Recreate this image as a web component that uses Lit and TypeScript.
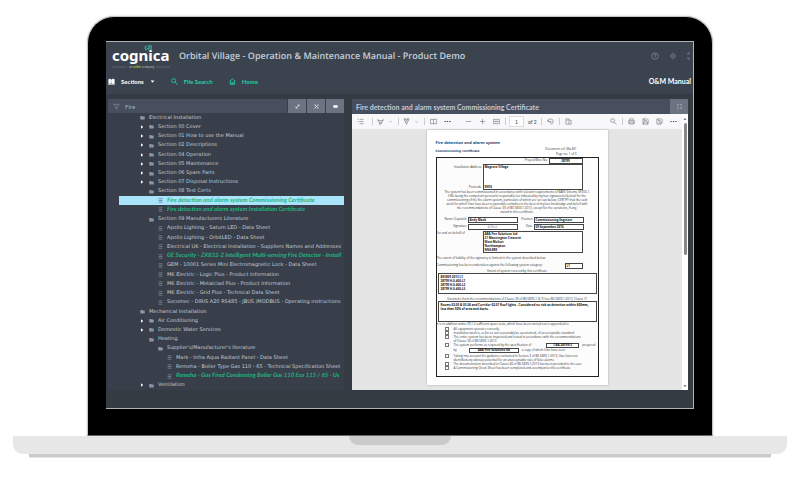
import { LitElement, html, css, svg, nothing } from "lit";
import { customElement } from "lit/decorators.js";
import { classMap } from "lit/directives/class-map.js";

const icons: Record<string, unknown> = {
  help: svg`<circle cx="8" cy="8" r="6.5"/><path d="M6 6.5a2 2 0 1 1 2.4 2V10M8 11.5v1"/>`,
  sun: svg`<circle cx="8" cy="8" r="3"/><path d="M8 1v2.5M8 12.5v2.5M1 8h2.5M12.5 8H15M3 3l1.800 1.800M11.200 11.200L13 13M13 3l-1.800 1.800M4.800 11.200L3 13"/>`,
  expand: svg`<path d="M2 6V2h4M10 2h4v4M14 10v4h-4M6 14H2v-4"/>`,
  book: svg`<path fill="currentColor" d="M2 3h4v9H2zM9 3h5v9H9z"/><path d="M0 14h16M6 6h3M6 9h3"/>`,
  search: svg`<circle cx="6" cy="6" r="4.500"/><path d="M9.500 9.500L15 15"/>`,
  home: svg`<path d="M1.500 7.500L8 2l6.500 5.500M3 7v7.500h10V7M6.500 14v-4h3v4"/>`,
  caret: svg`<path fill="currentColor" stroke="none" d="M2 5h12l-6 7z"/>`,
  right: svg`<path fill="currentColor" stroke="none" d="M4 1l9 7-9 7z"/>`,
  funnel: svg`<path d="M2 3h12L9.500 8.500V14l-3-2V8.500z"/>`,
  arrows: svg`<path d="M3 13L13 3M8.500 3H13v4.500M3 8.500V13h4.500"/>`,
  close: svg`<path d="M3 3l10 10M13 3L3 13M1 3h4M11 3h4M1 13h4M11 13h4"/>`,
  pill: svg`<rect fill="currentColor" x="1" y="5" width="14" height="6" rx="3"/>`,
  folder: svg`<path fill="currentColor" stroke="none" d="M1 3h6l1 2h7v9H1z"/>`,
  file: svg`<path d="M2 2.500h12M2 8h12M2 13.500h12"/>`,
  list: svg`<path d="M1 3h3M6 3h9M4 8h11M6 13h9M1 8h1"/>`,
  marker: svg`<path d="M2 2v4h12V2M4 6l1 5h6l1-5M6 11v4l4-2v-2"/>`,
  pen: svg`<path d="M2 2h12L9.500 12h-3zM5 2l3 6 3-6M8 12v3"/>`,
  chevron: svg`<path d="M4 7l4 3 4-3"/>`,
  book2: svg`<path d="M1 3h14v10H1zM8 3v10"/>`,
  dots: svg`<path fill="currentColor" stroke="none" d="M1 7h3v2H1zM6.500 7h3v2h-3zM12 7h3v2h-3z"/>`,
  minus: svg`<path d="M2 8h12"/>`,
  plus: svg`<path d="M2 8h12M8 2v12"/>`,
  fit: svg`<path d="M1 3h14v10H1zM4 8h8M6 6L4 8l2 2M10 6l2 2-2 2"/>`,
  rotate: svg`<path d="M2 8a6 6 0 1 1 6 6M2 4v4h4M8 7l2 2-2 2-2-2z"/>`,
  page: svg`<path d="M2 2h7v12H2zM9 5h5v9H9M4 5h3"/>`,
  print: svg`<path d="M4 6V2h8v4M4 12H1.500V6h13v6H12M4 9.500h8V14H4z"/>`,
  save: svg`<path d="M2 2h10l2 2v10H2zM5 2v4h6M4 14V9h8v5"/>`,
  saveas: svg`<path d="M2 2h10l2 2v4M5 2v4h6M2 2v12h5V9h5M9 14l5-5 1 1-5 5H9z"/>`,
};

const icon = (name: string, kind = "") => html`<svg class="icon ${kind}" viewBox="0 0 16 16" aria-hidden="true">${icons[name]}</svg>`;

const shared = css`
  *, *::before, *::after { box-sizing: border-box; }
  button, input { font: inherit; color: inherit; margin: 0; padding: 0; border: 0; background: none; }
  .icon { width: 7px; height: 7px; flex: none; fill: none; stroke: currentColor; stroke-width: 2; display: block; }
  .small { width: 5px; height: 5px; }
`;

interface Node { level: number; text: string; kind?: "file"; closed?: boolean; hit?: boolean; selected?: boolean; }

const nodes: Node[] = [
  { level: 0, text: "Electrical Installation" },
  { level: 1, text: "Section 00 Cover", closed: true },
  { level: 1, text: "Section 01 How to use the Manual", closed: true },
  { level: 1, text: "Section 02 Descriptions", closed: true },
  { level: 1, text: "Section 04 Operation", closed: true },
  { level: 1, text: "Section 05 Maintenance", closed: true },
  { level: 1, text: "Section 06 Spare Parts", closed: true },
  { level: 1, text: "Section 07 Disposal Instructions", closed: true },
  { level: 1, text: "Section 08 Test Certs" },
  { level: 2, text: "Fire detection and alarm system Commissioning Certificate", kind: "file", hit: true, selected: true },
  { level: 2, text: "Fire detection and alarm system Installation Certificate", kind: "file", hit: true },
  { level: 1, text: "Section 09 Manufacturers Literature" },
  { level: 2, text: "Apollo Lighting - Saturn LED - Data Sheet", kind: "file" },
  { level: 2, text: "Apollo Lighting - OrbitLED - Data Sheet", kind: "file" },
  { level: 2, text: "Electrical UK - Electrical Installation - Suppliers Names and Addresses", kind: "file" },
  { level: 2, text: "GE Security - ZX832-2 Intelligent Multi-sensing Fire Detector - Install", kind: "file", hit: true },
  { level: 2, text: "GEM - 10001 Series Mini Electromagnetic Lock - Data Sheet", kind: "file" },
  { level: 2, text: "MK Electric - Logic Plus - Product Information", kind: "file" },
  { level: 2, text: "MK Electric - Metalclad Plus - Product Information", kind: "file" },
  { level: 2, text: "MK Electric - Grid Plus - Technical Data Sheet", kind: "file" },
  { level: 2, text: "Socomec - DIRIS A20 RS485 - JBUS /MODBUS - Operating instructions", kind: "file" },
  { level: 0, text: "Mechanical Installation" },
  { level: 1, text: "Air Conditioning", closed: true },
  { level: 1, text: "Domestic Water Services", closed: true },
  { level: 1, text: "Heating" },
  { level: 2, text: "Supplier's/Manufacturer's literature" },
  { level: 3, text: "Mark - Infra Aqua Radiant Panel - Data Sheet", kind: "file" },
  { level: 3, text: "Remeha - Boiler Type Gas 110 - 65 - Technical Specification Sheet", kind: "file" },
  { level: 3, text: "Remeha - Gas Fired Condensing Boiler Gas 110 Eco 115 / 65 - Us", kind: "file", hit: true },
  { level: 1, text: "Ventilation", closed: true },
];

@customElement("section-tree")
class SectionTree extends LitElement {
  static styles = [shared, css`
    :host { display: flex; flex-direction: column; min-width: 0; font-size: 6px; line-height: 8px; text-rendering: geometricPrecision; color: #c3cad5; }
    .filter { display: flex; gap: 1px; height: 14px; background: #383f4a; }
    .box { flex: 1; display: flex; align-items: center; gap: 5px; padding: 0 5px; background: #474e5e; color: #a5aebd; }
    .box input { flex: 1; min-width: 0; height: 12px; }
    .box .icon { stroke-width: 1; }
    .filter button { width: 18px; display: grid; place-items: center; background: #6b7480; color: #fff; }
    ul { list-style: none; margin: 0; padding: 0; flex: 1; display: grid; grid-template-columns: minmax(0, 1fr); grid-auto-rows: 1fr; background: #383f4a; font-family: "DejaVu Sans", sans-serif; font-size: 5px; }
    li { display: flex; align-items: center; gap: 4px; min-height: 0; white-space: nowrap; margin-left: 11px; }
    .l0 { padding-left: 12px; } .l1 { padding-left: 21px; } .l2 { padding-left: 30px; } .l3 { padding-left: 39px; }
    .twist { width: 5px; flex: none; color: #fff; }
    .twist .icon { width: 4px; height: 4px; }
    li > .icon { color: #8e97a3; }
    .name { flex: 1; min-width: 0; overflow: hidden; }
    .hit { color: #1fb57f; font-family: Lato, sans-serif; font-size: 6px; font-style: italic; font-weight: bold; }
    .selected { background: #a9e4fb; }
    .selected > .icon { color: #466477; }
  `];
  render() {
    return html`
      <div class="filter">
        <label class="box">${icon("funnel")}<input type="text" aria-label="Filter sections" value="Fire"></label>
        <button aria-label="Expand all">${icon("arrows", "small")}</button>
        <button aria-label="Clear">${icon("close", "small")}</button>
        <button aria-label="Toggle">${icon("pill", "small")}</button>
      </div>
      <ul role="tree">
        ${nodes.map(n => html`<li role="treeitem" class=${classMap({ ["l" + n.level]: true, hit: !!n.hit, selected: !!n.selected })}>
          <span class="twist">${n.closed ? icon("right") : nothing}</span>${icon(n.kind ?? "folder", "small")}<span class="name">${n.text}</span>
        </li>`)}
      </ul>`;
  }
}

@customElement("certificate-page")
class CertificatePage extends LitElement {
  static styles = [shared, css`
    :host { display: block; width: 181px; height: 255px; padding: 10px 9px 9px; background: #fff; color: #333; font: 3px/4px "Open Sans", sans-serif; box-shadow: 0 0 2px #aaa; }
    h1, h2, p { margin: 0; font-weight: inherit; }
    h1 { font: bold 4px/5px "Open Sans", sans-serif; color: #17466e; }
    .head { display: flex; justify-content: space-between; align-items: flex-end; height: 12px; padding-right: 22px; }
    h2 { font: bold 3px/4px "DejaVu Sans", sans-serif; color: #17466e; align-self: center; }
    .ref { text-align: right; line-height: 5px; }
    .frame { border: 1px solid #222; height: 220px; display: flex; flex-direction: column; background: #fcfcfc; }
    .row { display: flex; gap: 1px; padding-right: 15px; }
    .row > .label { text-align: right; }
    .grow { flex: 1; }
    .field { border: 1px solid #444; font-weight: bold; padding: 0 1px; line-height: 4px; height: 6px; white-space: nowrap; color: #111; background: #fff; }
    .project { width: 34px; text-align: center; }
    .wide { width: 100px; }
    .address { height: 26px; display: flex; flex-direction: column; justify-content: space-between; }
    .side { display: flex; flex-direction: column; justify-content: space-between; padding: 1px 0; }
    .center { text-align: center; }
    .terms { height: 26px; white-space: nowrap; }
    .signs { display: grid; grid-template-columns: 30px 50px 14px 50px; column-gap: 1px; row-gap: 1px; padding: 1px 0; }
    .signs .label { text-align: right; }
    .behalf { height: 22px; }
    .ink { font-style: italic; font-weight: normal; color: #8a88b8; text-align: center; }
    .gap { margin-top: 3px; }
    .category { width: 18px; }
    .area { height: 21px; margin: 0 1px; border: 1px solid #444; font-weight: bold; padding: 1px 2px; color: #111; background: #fff; }
    .under { text-decoration: underline; margin-top: 3px; }
    .checks { display: flex; flex-direction: column; justify-content: space-between; height: 45px; padding: 1px 8px; }
    .check { display: flex; align-items: flex-start; gap: 5px; white-space: nowrap; }
    .check input { appearance: none; width: 4px; height: 4px; border: 1px solid #777; flex: none; }
    .line { display: flex; gap: 3px; }
    .spec { width: 33px; text-align: center; height: 5px; line-height: 3px; margin-left: 12px; }
    .by { width: 50px; text-align: center; height: 5px; line-height: 3px; margin-left: 9px; }
  `];
  check(body: unknown) {
    return html`<label class="check"><input type="checkbox"><span>${body}</span></label>`;
  }
  render() {
    return html`
      <h1>Fire detection and alarm system</h1>
      <div class="head"><h2>Commissioning certificate</h2><div class="ref">Document ref: Sfw-M1<br>Page no: 1 of 3</div></div>
      <div class="frame">
        <div class="row"><span class="label grow">Project/Misc No:</span><span class="field project">28799</span></div>
        <div class="row"><span class="label grow side"><span>Installation Address</span><span>Postcode</span></span><span class="field wide address"><span>Magrove Village</span><span>SN10</span></span></div>
        <p class="center terms">The system has been commissioned in accordance with relevant requirements of BAFE Scheme SP203-1<br>I/We being the competent person(s) responsible (as indicated by my/our signature(s) below) for the<br>commissioning of the fire alarm system, particulars of which are set out below, CERTIFY that the said<br>work for which I/we have been responsible complies to the best of my/our knowledge and belief with<br>the recommendations of Clause 39 of BS 5839-1:2013, except for the variations, if any,<br>stated in this certificate.</p>
        <div class="signs">
          <span class="label">Name (Capitals)</span><span class="field">Andy Black</span><span class="label">Position</span><span class="field">Commissioning Engineer</span>
          <span class="label">Signature</span><span class="field ink">A Black</span><span class="label">Date</span><span class="field">09 September 2016</span>
        </div>
        <div class="row"><span class="grow">For and on behalf of</span><span class="field wide behalf">ABA Fire Solutions Ltd<br>21 Mannington Crescent<br>West Molton<br>Northampton<br>NN6 8RE</span></div>
        <p class="gap">The extent of liability of the signatory is limited to the system described below:</p>
        <div class="row gap"><span class="grow">Commissioning has been undertaken against the following system category:</span><span class="field category">L1</span></div>
        <p class="center">Extent of system covered by this certificate</p>
        <div class="area">BS5839 2013 L1<br>28799 H-0-400-L1<br>28799 H-0-400-L2<br>28799 H-0-400-L3</div>
        <p class="center under">Variations from the recommendations of Clause 39 of BS 5839-1 (6.7) (see BS 5839-1:2013, Clause 7)</p>
        <div class="area">Rooms 02-05 &amp; 03-06 and Corridor 02-01 Roof lights - Considered no risk as detection within 600mm, less than 50% of area and ducts.</div>
        <p>It is in addition under 39.1.2 sufficient space tests, which have been carried out is appended to:</p>
        <div class="checks">
          ${this.check("All equipment operates correctly")}
          ${this.check("Installation work is, as far as can reasonably be ascertained, of an acceptable standard")}
          ${this.check(html`The entire system has been inspected and tested in accordance with the recommendations<br>of Clause 39 of BS 5839-1:2013`)}
          ${this.check(html`<span class="line">The system performs as required by the specification of<span class="field spec">CBA-28799/2</span>prepared</span><span class="line">by<span class="field by">ABA Fire Solutions ltd</span>a copy of which I/we have seen</span>`)}
          ${this.check(html`Taking into account the guidance contained in Section 3 of BS 5839-1:2013, I/we have not<br>identified any obvious potential for an unacceptable rate of false alarms`)}
          ${this.check("The documentation described in Clause 40 of BS 5839-1:2013 has been provided to the user")}
          ${this.check("A Commissioning Check Sheet has been completed and accompanies this certificate")}
        </div>
      </div>`;
  }
}

@customElement("document-viewer")
class DocumentViewer extends LitElement {
  static styles = [shared, css`
    :host { display: flex; flex-direction: column; min-width: 0; }
    .title { display: flex; align-items: center; height: 15px; padding-left: 4px; background: #474e5e; color: #c3cad6; font-size: 7px; }
    .title h2 { margin: 0; font: inherit; font-weight: bold; flex: 1; white-space: nowrap; }
    .title button { width: 18px; height: 15px; display: grid; place-items: center; background: #6b7480; }
    .body { flex: 1; display: flex; background: #fff; min-height: 0; }
    .main { flex: 1; display: flex; flex-direction: column; min-width: 0; }
    .tools { display: flex; align-items: center; height: 15px; padding: 0 5px; background: #f8f8fa; color: #444; font-size: 5px; }
    .tools button { display: block; }
    .tools .icon { stroke-width: 1; }
    .group { display: flex; align-items: center; gap: 7px; padding: 0 5px; border-right: 1px solid #ccc; }
    .group:first-child { padding: 0 8px 0 0; }
    .pair { gap: 4px; padding: 0 5px 0 4px; }
    .last { border: 0; }
    .zoom { margin-left: 4px; }
    .end { padding-right: 0; }
    .space { flex: 1; }
    .pageno { width: 15px; height: 11px; border: 1px solid #ddd; background: #fff; text-align: center; margin-left: 3px; }
    .of { padding: 0 4px; white-space: nowrap; }
    .bar { width: 1px; height: 7px; background: #ccc; }
    .canvas { flex: 1; background: #e5e5e5; display: flex; justify-content: center; align-items: flex-start; padding-top: 1px; }
    .scroll { width: 6px; display: flex; flex-direction: column; align-items: center; gap: 2px; color: #555; padding: 3px 0 2px; background: #fff; }
    .scroll .icon { width: 4px; height: 4px; }
    .up { transform: rotate(180deg); }
    .thumb { width: 3px; height: 132px; border-radius: 2px; background: #85878b; }
  `];
  tool(name: string, label: string) { return html`<button aria-label=${label}>${icon(name)}</button>`; }
  render() {
    return html`
      <div class="title"><h2>Fire detection and alarm system Commissioning Certificate</h2><button aria-label="Full screen">${icon("expand", "small")}</button></div>
      <div class="body">
        <div class="main">
          <div class="tools">
            <div class="group">${this.tool("list", "Contents")}</div>
            <div class="group pair">${this.tool("marker", "Highlight")}${icon("chevron", "small")}</div>
            <div class="group pair">${this.tool("pen", "Draw")}${icon("chevron", "small")}</div>
            <div class="group last">${this.tool("book2", "Page view")}${this.tool("dots", "More")}</div>
            <div class="group zoom last">${this.tool("minus", "Zoom out")}${this.tool("plus", "Zoom in")}${this.tool("fit", "Fit")}</div>
            <span class="bar"></span>
            <input class="pageno" aria-label="Page" value="1"><span class="of">of 2</span><span class="bar"></span>
            <div class="group">${this.tool("rotate", "Rotate")}</div>
            <div class="group last">${this.tool("page", "Layout")}</div>
            <div class="space"></div>
            <div class="group">${this.tool("search", "Search")}</div>
            <div class="group last end">${this.tool("print", "Print")}${this.tool("save", "Save")}${this.tool("saveas", "Save as")}${this.tool("dots", "More")}</div>
          </div>
          <div class="canvas"><certificate-page></certificate-page></div>
        </div>
        <div class="scroll"><span class="up">${icon("caret")}</span><span class="thumb"></span><span class="space"></span>${icon("caret")}</div>
      </div>`;
  }
}

@customElement("app-root")
class AppRoot extends LitElement {
  static styles = [shared, css`
    :host { display: block; padding: 16px 13px 22px; background: #fff; font-family: Lato, "Open Sans", sans-serif; }
    .lid { margin: 0 74px; padding: 24px 18px 26px; background: #000; border: 1px solid #c4c4c4; border-bottom-color: #666; border-radius: 27px 27px 0 0; box-shadow: 0 0 2px #ccc; }
    .screen { border: 1px solid #aeb5ba; border-left: 0; background: #353b42; color: #c6cedb; }
    header { background: #3b444e; padding: 0 2px 2px 6px; }
    .top { display: flex; align-items: center; height: 28px; gap: 9px; }
    .logo { width: 58px; height: 28px; flex: none; }
    .word { font: bold 15px "Noto Sans", sans-serif; fill: #fff; }
    .tag { font: 3px "Open Sans", sans-serif; fill: #c6cedb; }
    .tag tspan { fill: #9ac832; font-weight: bold; }
    h1 { margin: 0; font: 600 9px/12px "Open Sans", sans-serif; text-rendering: geometricPrecision; flex: 1; white-space: nowrap; }
    .actions { display: flex; gap: 10px; color: #a3abb5; overflow: hidden; width: 40px; }
    .actions .icon { width: 8px; height: 8px; stroke-width: 1; }
    nav { display: flex; align-items: center; height: 22px; font-size: 6px; font-weight: bold; gap: 16px; margin-left: -4px; }
    nav button, nav a { display: flex; align-items: center; gap: 6px; color: #1fcfa8; text-decoration: none; }
    nav button { color: #fff; }
    .site { margin-left: auto; color: #fff; font-size: 7px; }
    main { display: grid; grid-template-columns: 236px 1fr; gap: 8px; padding: 5px 5px 18px 2px; height: 314px; }
    .deck { height: 18px; background: #e7e7e7; border-radius: 0 0 10px 10px; display: flex; justify-content: center; }
    .notch { width: 102px; height: 9px; background: #cacaca; border-radius: 0 0 9px 9px; }
    .foot { height: 4px; margin: 0 16px; background: #cacaca; border-bottom: 1px solid #e7e7e7; }
  `];
  render() {
    return html`
      <div class="lid"><div class="screen">
        <header>
          <div class="top">
            <svg class="logo" viewBox="0 0 58 28" role="img" aria-label="cognica, an orbit company">
              <text class="word" x="0" y="19">cognica</text>
              <g fill="none" stroke="#42c2bd"><path d="M35 4a2 2 0 1 0 0 4M39 3v5M37 3v4a2 2 0 0 1-2-1"/></g>
              <path d="M0 25h15M44 25h14" stroke="#7c858f" stroke-width=".5"/>
              <text class="tag" x="17" y="26">an <tspan>orbit</tspan> company</text>
            </svg>
            <h1>Orbital Village - Operation &amp; Maintenance Manual - Product Demo</h1>
            <div class="actions">${icon("help")}${icon("sun")}${icon("expand")}</div>
          </div>
          <nav>
            <button>${icon("book")}Sections${icon("caret", "small")}</button>
            <a href="#search">${icon("search")}File Search</a>
            <a href="#home">${icon("home")}Home</a>
            <span class="site">O&amp;M Manual</span>
          </nav>
        </header>
        <main><section-tree></section-tree><document-viewer></document-viewer></main>
      </div></div>
      <div class="deck"><div class="notch"></div></div>
      <div class="foot"></div>`;
  }
}
